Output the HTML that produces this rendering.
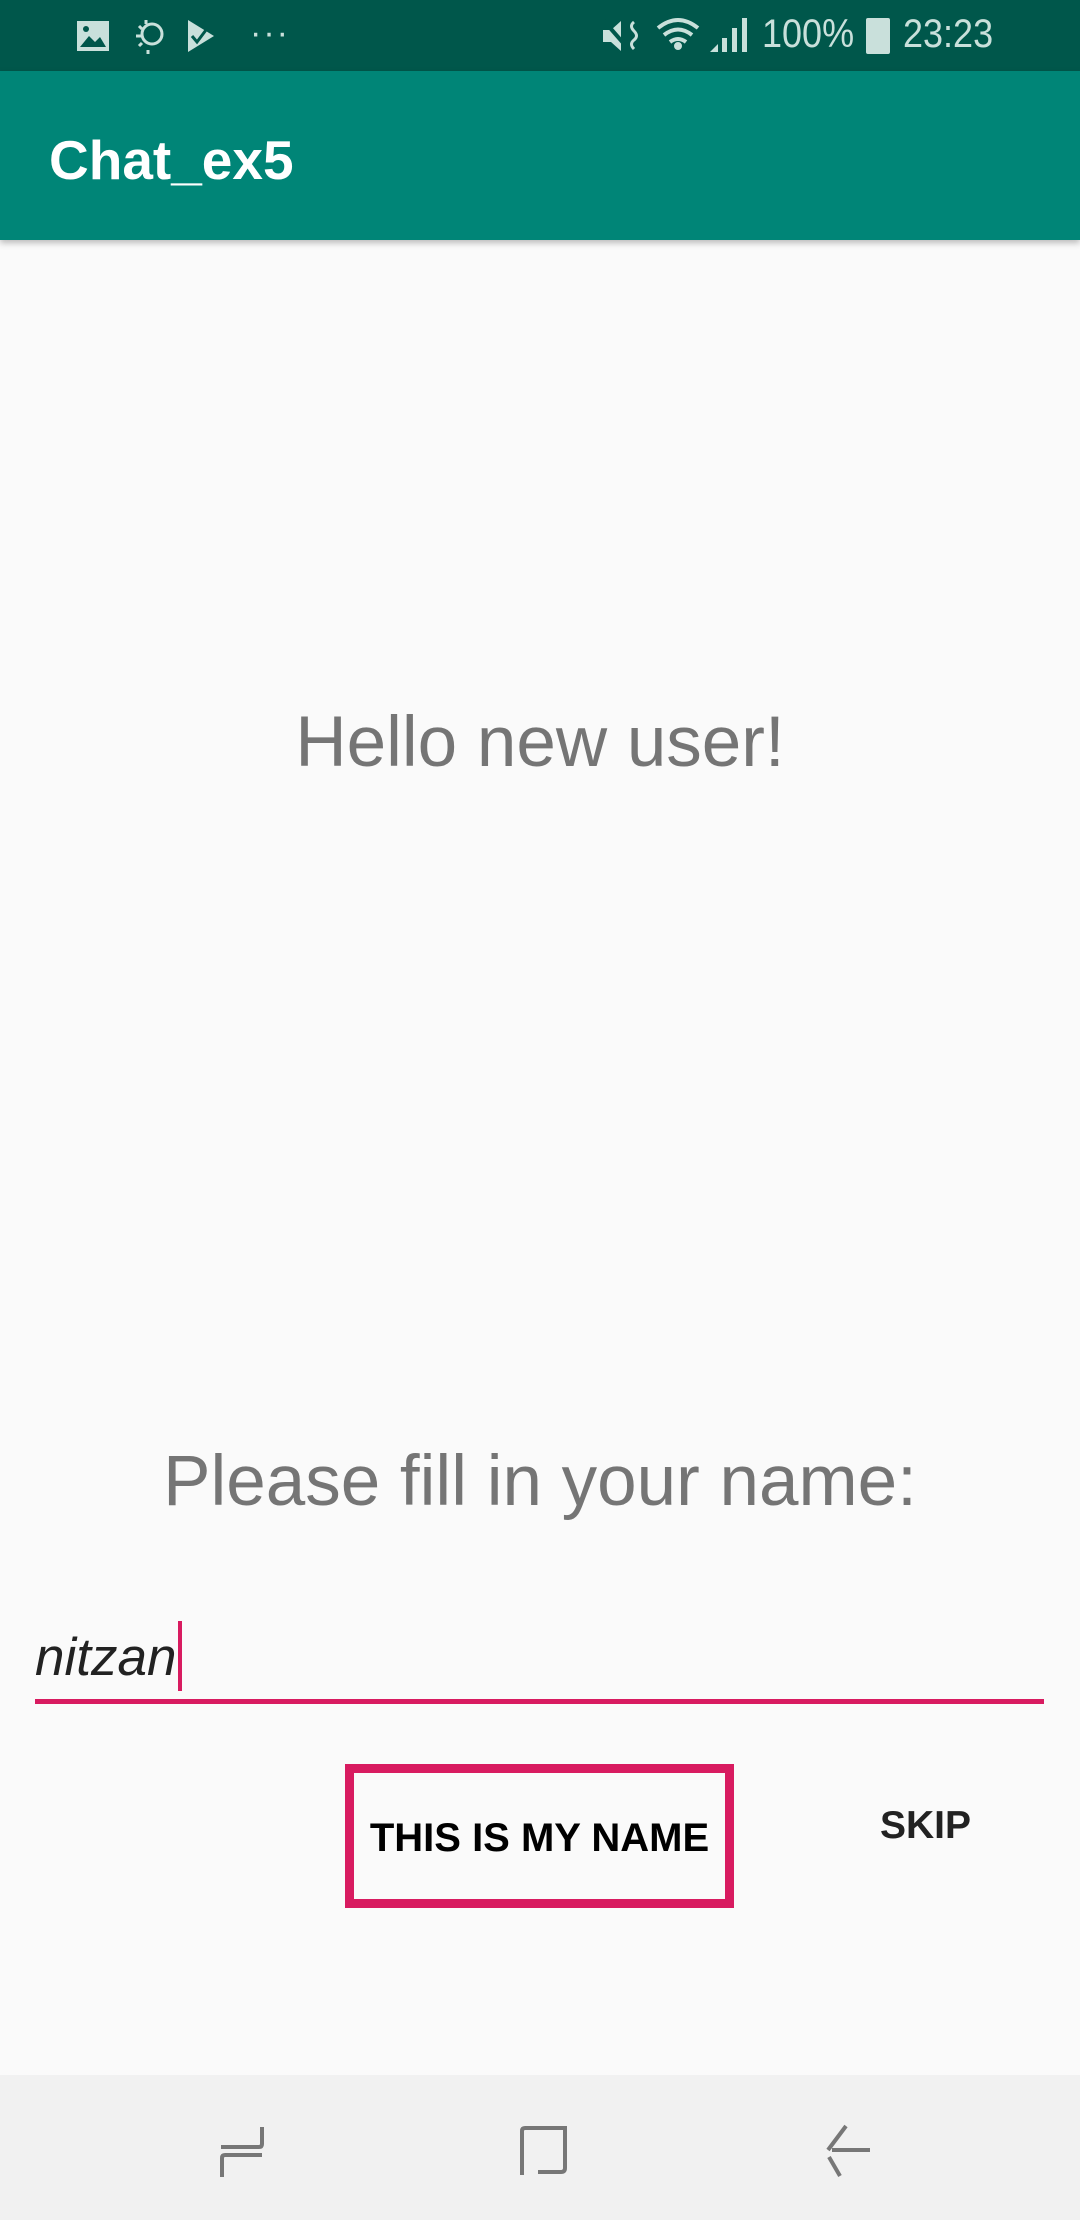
<!DOCTYPE html>
<html><head><meta charset="utf-8"><style>
*{margin:0;padding:0;box-sizing:border-box}
body{width:1080px;height:2220px;background:#fafafa;position:relative;overflow:hidden;font-family:"Liberation Sans",sans-serif}
.abs{position:absolute}
#sb{left:0;top:0;width:1080px;height:71px;background:#00574b}
#ab{left:0;top:71px;width:1080px;height:169px;background:#008577;box-shadow:0 3px 6px rgba(0,0,0,.25)}
.st{color:#c9e0db;font-size:40px;top:12px;transform:scaleX(.9);transform-origin:left}
</style></head><body>
<div id="sb" class="abs">
 <svg class="abs" style="left:76px;top:20px" width="34" height="32"><rect x="1" y="1" width="32" height="30" fill="#c9e0db"/><path d="M4 27 L13 16 L19 22 L24 17 L30 27Z" fill="#00574b"/><circle cx="10" cy="9" r="3" fill="#00574b"/></svg>
 <svg class="abs" style="left:126px;top:18px" width="44" height="36" fill="none" stroke="#c9e0db" stroke-width="3"><circle cx="26" cy="16" r="10"/><path d="M10 18h6M13 8l3 3M13 28l3-3M22 32v4M20 6V2"/></svg>
 <svg class="abs" style="left:186px;top:18px" width="30" height="36"><path d="M2 2 L28 18 L2 34Z" fill="#c9e0db"/><path d="M6 18l5 6 9-12" stroke="#00574b" stroke-width="3" fill="none"/></svg>
 <div class="abs" style="left:250px;top:14px;color:#c9e0db;font-size:34px;letter-spacing:2px">···</div>
 <svg class="abs" style="left:601px;top:18px" width="40" height="36"><path d="M2 12h8l10-9v30l-10-9H2Z" fill="#c9e0db"/><path d="M3 3l28 32" stroke="#00574b" stroke-width="4"/><path d="M33 4q-5 4 0 9t0 9 0 9" stroke="#c9e0db" stroke-width="3" fill="none"/></svg>
 <svg class="abs" style="left:655px;top:16px" width="50" height="40" fill="none" stroke="#c9e0db" stroke-width="4"><path d="M3 12q20-16 40 0M9 19q14-11 28 0M15 26q8-6 16 0"/><circle cx="23" cy="30" r="2" fill="#c9e0db"/></svg>
 <svg class="abs" style="left:708px;top:16px" width="45" height="38" fill="#c9e0db"><path d="M2 36l8-8v8Z"/><rect x="14" y="22" width="5" height="14"/><rect x="24" y="12" width="5" height="24"/><rect x="34" y="2" width="5" height="34"/></svg>
 <div class="abs st" style="left:762px">100%</div>
 <div class="abs" style="left:866px;top:18px;width:24px;height:36px;background:#c9e0db;border-radius:2px"></div>
 <div class="abs st" style="left:903px">23:23</div>
</div>
<div id="ab" class="abs"><div class="abs" style="left:49px;top:57px;color:#fff;font-size:55px;font-weight:bold">Chat_ex5</div></div>
<div class="abs" style="left:0;width:1080px;top:702px;text-align:center;color:#757575;font-size:71px">Hello new user!</div>
<div class="abs" style="left:0;width:1080px;top:1441px;text-align:center;color:#757575;font-size:71px">Please fill in your name:</div>
<div class="abs" style="left:35px;top:1627px;color:#222;font-size:53px;font-style:italic">nitzan</div>
<div class="abs" style="left:178px;top:1621px;width:4px;height:70px;background:#d81b60"></div>
<div class="abs" style="left:35px;top:1699px;width:1009px;height:5px;background:#d81b60"></div>
<div class="abs" style="left:345px;top:1764px;width:389px;height:144px;border:9px solid #d81b60"></div>
<div class="abs" style="left:345px;width:389px;top:1816px;text-align:center;color:#000;font-size:40px;font-weight:bold">THIS IS MY NAME</div>
<div class="abs" style="left:880px;top:1804px;color:#222;font-size:39px;font-weight:bold">SKIP</div>
<div class="abs" style="left:0;top:2075px;width:1080px;height:145px;background:#f1f1f1"></div>
<svg class="abs" style="left:215px;top:2125px" width="56" height="54" fill="none" stroke="#777" stroke-width="4"><path d="M47 2v17q0 3-3 3H6"/><path d="M47 30H10q-3 0-3 3v19"/></svg>
<svg class="abs" style="left:518px;top:2125px" width="52" height="52" fill="none" stroke="#777" stroke-width="4"><path d="M4 50V6q0-3 3-3h40v40q0 4-4 4H20"/></svg>
<svg class="abs" style="left:822px;top:2124px" width="50" height="54" fill="none" stroke="#777" stroke-width="4"><path d="M24 2L6 26M7 33l11 19M10 26h38"/></svg>
</body></html>
